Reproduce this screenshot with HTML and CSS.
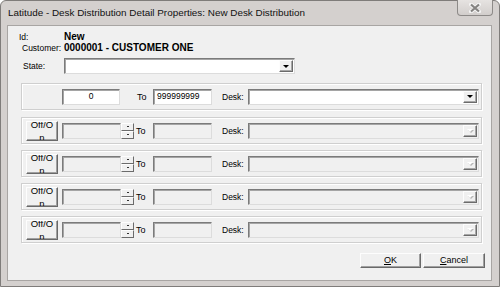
FILE: index.html
```html
<!doctype html>
<html>
<head>
	<meta charset='utf-8'>
	<title>Desk Distribution Detail Properties</title>
	<link rel="stylesheet" href="styles.css">
</head>
<body>
<div class='window'>
	<div class='titlebar'>
		<span class='title'>Latitude - Desk Distribution Detail Properties: New Desk Distribution</span>
		<div class='close'>
			<svg width='12' height='10' viewBox='0 0 12 10'>
				<path d='M2 1.5L10 8.5M10 1.5L2 8.5' stroke='#f4f4f4' stroke-width='4' stroke-linecap='round'/>
				<path d='M2 1.5L10 8.5M10 1.5L2 8.5' stroke='#858381' stroke-width='2.2'/>
			</svg>
		</div>
	</div>
	<div class='client'>
		<div class='info'>
			<div class='row'><span class='lbl'>Id:</span><b>New</b></div>
			<div class='row'><span class='lbl lbl-cust'>Customer:</span><b>0000001 - CUSTOMER ONE</b></div>
			<div class='row row-state'><span class='lbl lbl-state'>State:</span>
				<div class='combo state-combo'><span class='drop'><i class='arrow'></i></span></div>
			</div>
		</div>

		<div class='groups'>
			<div class='group'>
				<span class='spacer'></span>
				<div class='field field-first num'>0</div>
				<span class='gap'></span>
				<span class='to to-first'>To</span>
				<div class='field'>999999999</div>
				<span class='desk'>Desk:</span>
				<div class='combo desk-combo'><span class='drop'><i class='arrow'></i></span></div>
			</div>
			<div class='group'>
				<div class='btn toggle'><span>Off/On</span></div>
				<div class='field off'></div>
				<div class='spin'><span class='up'></span><span class='down'></span></div>
				<span class='to'>To</span>
				<div class='field off'></div>
				<span class='desk'>Desk:</span>
				<div class='combo desk-combo off'><span class='drop'><i class='arrow'></i></span></div>
			</div>
			<div class='group'>
				<div class='btn toggle'><span>Off/On</span></div>
				<div class='field off'></div>
				<div class='spin'><span class='up'></span><span class='down'></span></div>
				<span class='to'>To</span>
				<div class='field off'></div>
				<span class='desk'>Desk:</span>
				<div class='combo desk-combo off'><span class='drop'><i class='arrow'></i></span></div>
			</div>
			<div class='group'>
				<div class='btn toggle'><span>Off/On</span></div>
				<div class='field off'></div>
				<div class='spin'><span class='up'></span><span class='down'></span></div>
				<span class='to'>To</span>
				<div class='field off'></div>
				<span class='desk'>Desk:</span>
				<div class='combo desk-combo off'><span class='drop'><i class='arrow'></i></span></div>
			</div>
			<div class='group'>
				<div class='btn toggle'><span>Off/On</span></div>
				<div class='field off'></div>
				<div class='spin'><span class='up'></span><span class='down'></span></div>
				<span class='to'>To</span>
				<div class='field off'></div>
				<span class='desk'>Desk:</span>
				<div class='combo desk-combo off'><span class='drop'><i class='arrow'></i></span></div>
			</div>
		</div>

		<div class='footer'>
			<div class='btn action ok'><u>O</u>K</div>
			<div class='btn action cancel'><u>C</u>ancel</div>
		</div>
	</div>
</div>
</body>
</html>
```

FILE: styles.css
```css
*{margin:0;padding:0;box-sizing:border-box;}
body{width:500px;height:287px;overflow:hidden;background:#fff;font-family:"Liberation Sans",Arial,sans-serif;font-size:8.5px;color:#000;}

.window{width:500px;height:287px;display:flex;flex-direction:column;background:#d4d0ce;border:1px solid #7f7c7a;border-radius:6px 6px 0 0;}

.titlebar{height:24px;flex:none;display:flex;justify-content:space-between;align-items:flex-start;padding:0 6px 0 7px;}
.title{font-size:9.9px;line-height:23px;color:#111;}
.close{width:36px;height:16px;margin-top:-1px;display:flex;align-items:center;justify-content:center;border:1px solid #8d8a88;border-top:none;border-radius:0 0 4px 4px;background:linear-gradient(#e6e3e1,#d2cecc);}

.client{flex:none;height:256px;margin:0 7px 0 6px;background:#f0f0f0;border:1px solid #a8a5a3;padding-top:5px;}

.info{padding-left:11px;}
.row{display:flex;align-items:center;height:11px;}
.row b{font-size:10px;}
.lbl{width:45px;flex:none;}
.lbl-cust{padding-left:3px;}
.lbl-state{padding-left:4px;}
.row-state{height:16px;margin-top:5px;}

.combo{height:16px;background:#fff;border:1px solid;border-color:#7b7b7b #dcdcdc #dcdcdc #7b7b7b;box-shadow:inset 1px 1px 0 #a5a5a5;display:flex;justify-content:flex-end;padding:1px;}
.state-combo{width:231px;}
.desk-combo{width:231px;}
.combo.off{background:#f0f0f0;}
.drop{width:14px;height:12px;background:#f0f0f0;border:1px solid;border-color:#fdfdfd #6b6b6b #6b6b6b #fdfdfd;box-shadow:inset -1px -1px 0 #a7a7a7;display:flex;align-items:center;justify-content:center;}
.arrow{width:0;height:0;border-left:3px solid transparent;border-right:3px solid transparent;border-top:3px solid #000;}
.off .arrow{border-top-color:#fff;filter:drop-shadow(1px 1px 0 #b5b5b5);}

.groups{margin:9px 0 0 13px;width:461px;display:flex;flex-direction:column;gap:6px;}
.group{height:27px;display:flex;align-items:center;padding-left:4px;border:1px solid #cfcfcf;box-shadow:inset 1px 1px 0 #fff,1px 1px 0 #fff;}
.group:first-child{margin-bottom:1px;}

.spacer{width:36px;flex:none;}
.gap{width:14px;flex:none;}
.field{width:59px;height:16px;flex:none;background:#fff;border:1px solid;border-color:#7b7b7b #dcdcdc #dcdcdc #7b7b7b;box-shadow:inset 1px 1px 0 #a5a5a5;line-height:13px;padding-left:3px;}
.field-first{width:58px;}
.field.num{text-align:center;padding-left:0;}
.field.off{background:#f0f0f0;}
.to{width:19px;flex:none;padding-left:2px;font-size:9px;}
.to-first{padding-left:3px;}
.desk{width:36px;flex:none;padding-left:10px;}

.btn{background:#f0f0f0;border:1px solid;border-color:#fdfdfd #696969 #696969 #fdfdfd;box-shadow:inset -1px -1px 0 #a0a0a0;}
.toggle{width:32px;height:20px;margin-right:4px;flex:none;overflow:hidden;display:flex;align-items:center;justify-content:center;}
.toggle span{width:25px;font-size:9.5px;line-height:13px;text-align:center;word-break:break-all;}

.spin{width:13px;height:16px;flex:none;display:flex;flex-direction:column;}
.spin span{flex:1;background:#f0f0f0;border:1px solid;border-color:#fdfdfd #6b6b6b #6b6b6b #fdfdfd;display:flex;align-items:center;justify-content:center;}
.spin span::after{content:'';width:2px;height:1px;background:#333;}

.footer{display:flex;justify-content:flex-end;gap:2px;margin-top:10px;padding-right:6px;}
.action{height:15px;line-height:12px;text-align:center;font-size:9px;}
.ok{width:61px;}
.cancel{width:62px;}
```
